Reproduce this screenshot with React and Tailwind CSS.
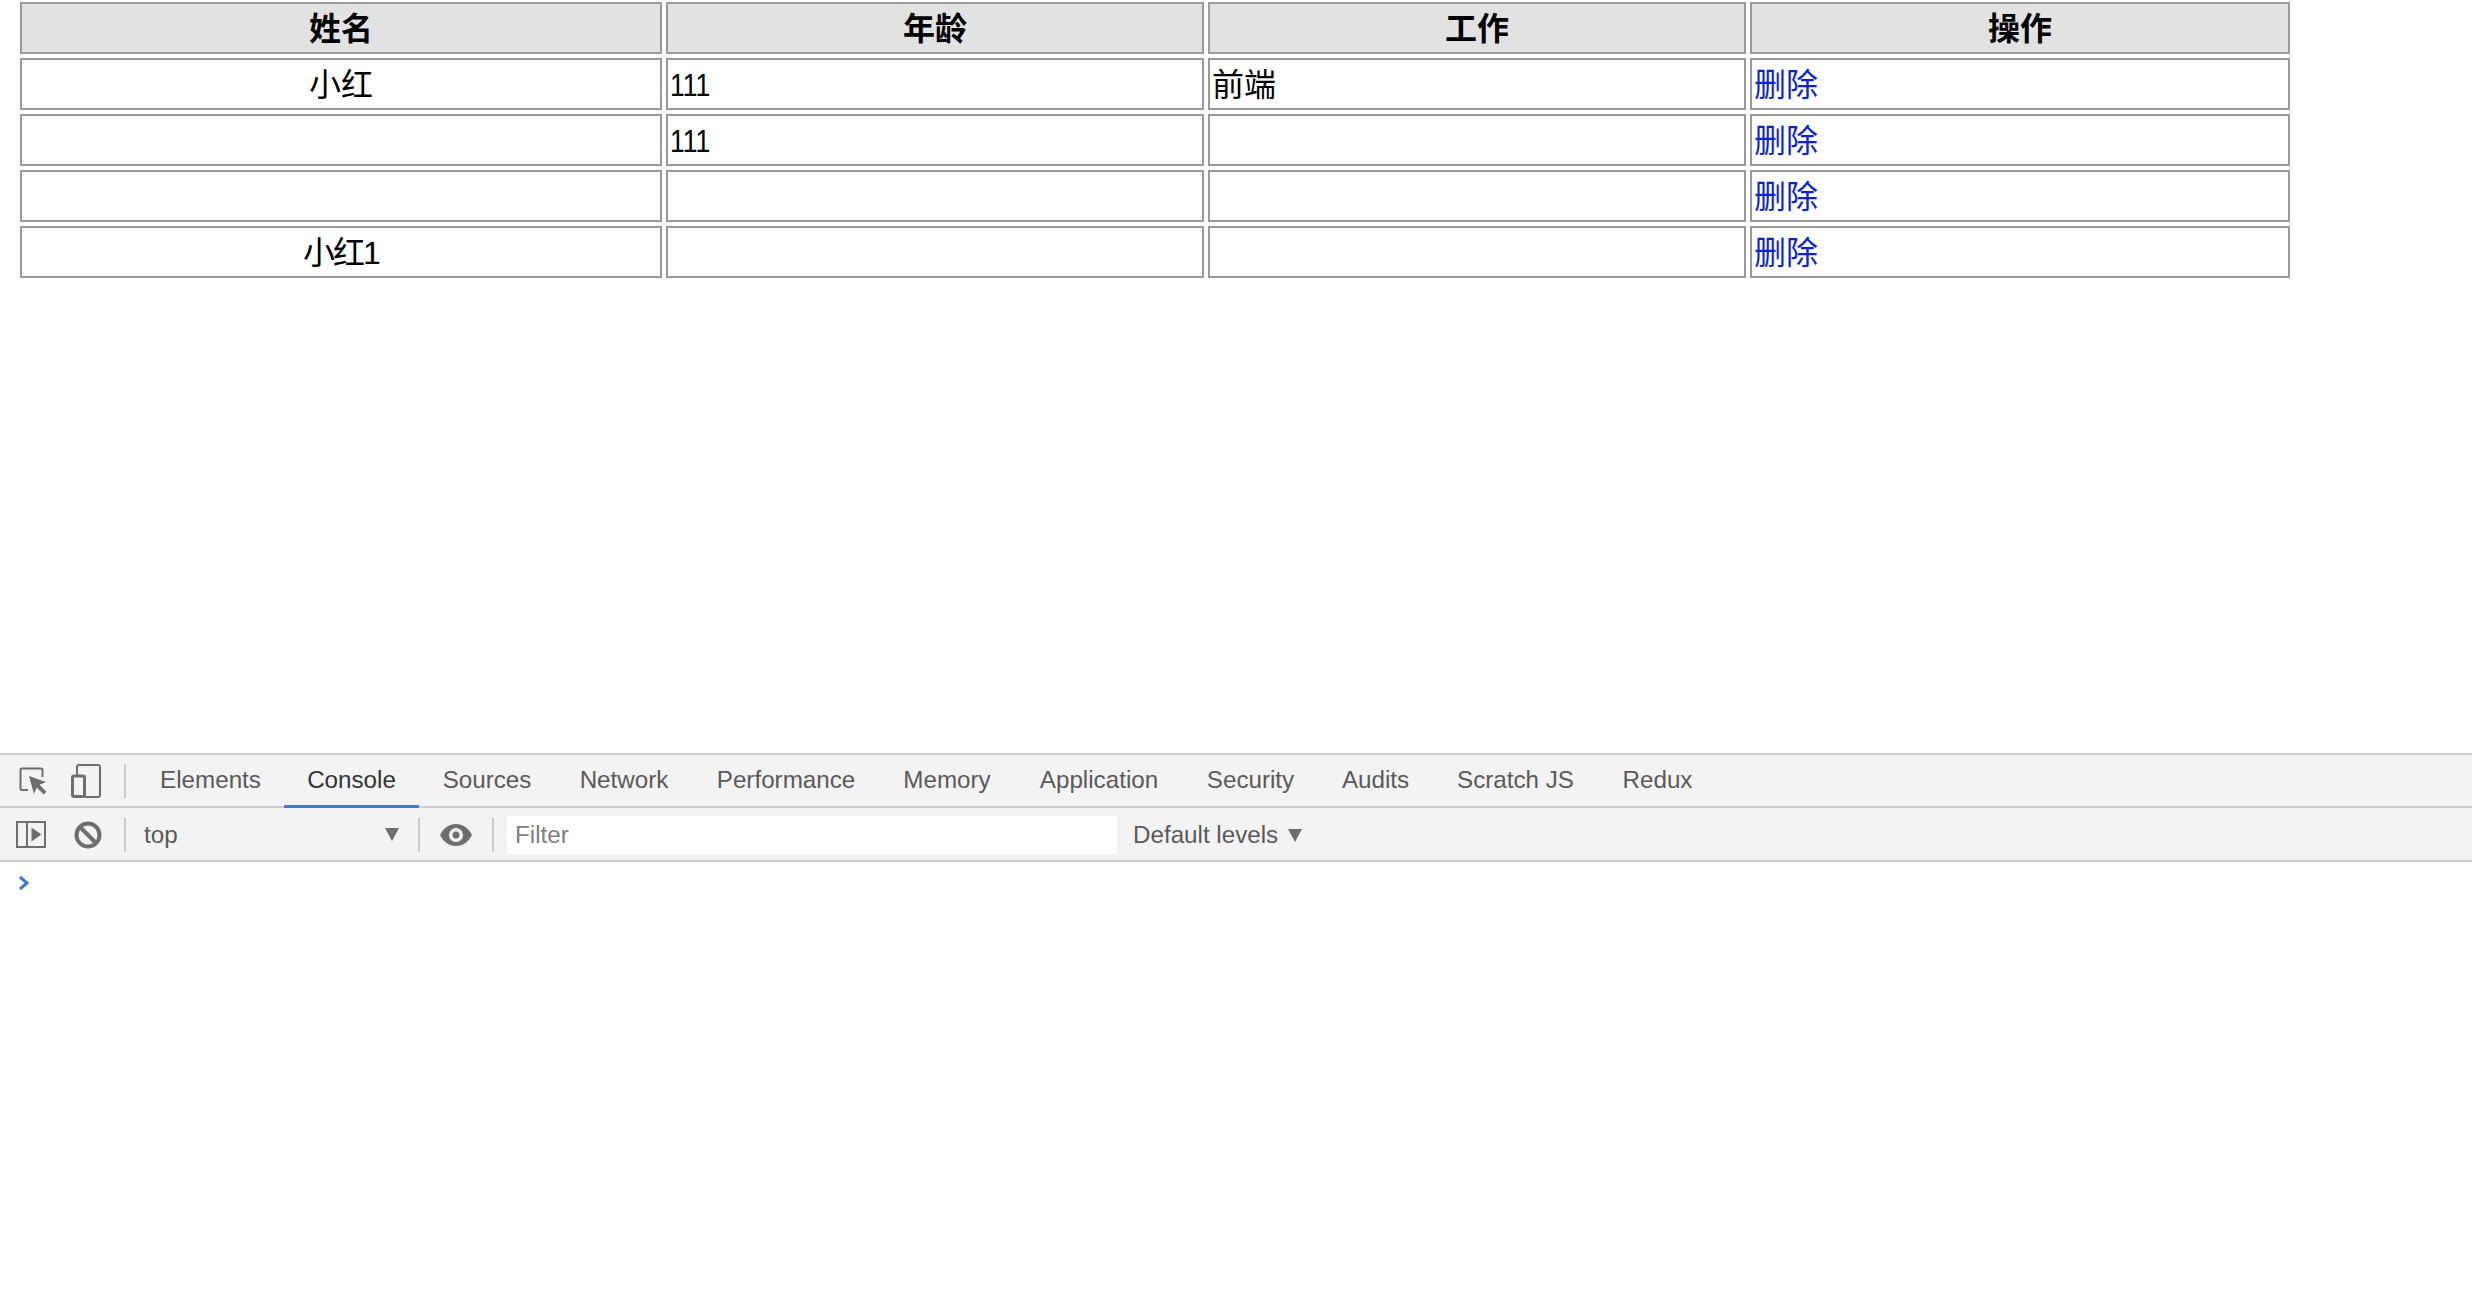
const rows = [
  { name: "小红", age: "111", job: "前端" },
  { name: "", age: "111", job: "" },
  { name: "", age: "", job: "" },
  { name: "小红1", age: "", job: "" },
];

const tabs = [
  { label: "Elements", width: "w-[147px]" },
  { label: "Console", width: "w-[135px]" },
  { label: "Sources", width: "w-[136px]" },
  { label: "Network", width: "w-[138px]" },
  { label: "Performance", width: "w-[186px]" },
  { label: "Memory", width: "w-[136px]" },
  { label: "Application", width: "w-[168px]" },
  { label: "Security", width: "w-[135px]" },
  { label: "Audits", width: "w-[115px]" },
  { label: "Scratch JS", width: "w-[165px]" },
  { label: "Redux", width: "w-[119px]" },
];

function InspectIcon() {
  return (
    <svg width="30" height="30" viewBox="0 0 30 30" fill="none">
      <path d="M10 24H4a1.5 1.5 0 0 1-1.5-1.5V4A1.5 1.5 0 0 1 4 2.500h19A1.500 1.500 0 0 1 24.500 4v7" stroke="#6e6e6e" strokeWidth="2" />
      <path d="M11 10l17 6-6.500 2.800 7 7-2.800 2.700-7-7L16 28z" fill="#6e6e6e" />
    </svg>
  );
}

function DeviceIcon() {
  return (
    <svg width="30" height="34" viewBox="0 0 30 34" fill="none">
      <path d="M6 11V3a2 2 0 0 1 2-2h19a2 2 0 0 1 2 2v28a2 2 0 0 1-2 2H14" stroke="#6e6e6e" strokeWidth="2" />
      <rect x="1.500" y="12" width="12" height="20.500" rx="1.500" stroke="#6e6e6e" strokeWidth="3" fill="#f3f3f3" />
    </svg>
  );
}

function SidebarIcon() {
  return (
    <svg width="30" height="28" viewBox="0 0 30 28" fill="none">
      <rect x="1" y="1" width="28" height="25" stroke="#6e6e6e" strokeWidth="2" />
      <path d="M11 1v25" stroke="#6e6e6e" strokeWidth="2" />
      <path d="M15.500 6.500l10 7-10 7z" fill="#6e6e6e" />
    </svg>
  );
}

function ClearIcon() {
  return (
    <svg width="28" height="28" viewBox="0 0 28 28" fill="none">
      <circle cx="14" cy="14" r="11.500" stroke="#6e6e6e" strokeWidth="4" />
      <path d="M6 6l16 16" stroke="#6e6e6e" strokeWidth="4" />
    </svg>
  );
}

function EyeIcon() {
  return (
    <svg width="32" height="22" viewBox="0 0 32 22">
      <path fillRule="evenodd" fill="#6e6e6e" d="M16 0c7 0 13 4.500 16 11-3 6.500-9 11-16 11S3 17.500 0 11C3 4.500 9 0 16 0zm0 4a7 7 0 1 0 0 14 7 7 0 0 0 0-14zm0 3.500a3.500 3.500 0 1 1 0 7 3.500 3.500 0 0 1 0-7z" />
    </svg>
  );
}

function Arrow() {
  return (
    <svg width="14" height="13" viewBox="0 0 14 13">
      <path d="M0 0h14L7 13z" fill="#6e6e6e" />
    </svg>
  );
}

function Sep() {
  return <div className="w-[2px] h-[34px] bg-[#cbcbcb]" />;
}

export default function App() {
  return (
    <div className="h-[1300px] flex flex-col bg-white font-['Liberation_Sans','Noto_Sans_CJK_SC',sans-serif]">
      <div className="h-[753px] pl-[16px] overflow-hidden">
        <table className="-mt-[2px] border-separate [border-spacing:4px] table-fixed w-[2278px] text-[32px] leading-[46px] text-black">
          <thead>
            <tr className="h-[52px]">
              <th className="w-[642px] border-2 border-[#9a9a9a] bg-[#e2e2e2] p-0 pt-[1px] font-bold">姓名</th>
              <th className="w-[538px] border-2 border-[#9a9a9a] bg-[#e2e2e2] p-0 pt-[1px] font-bold">年龄</th>
              <th className="w-[538px] border-2 border-[#9a9a9a] bg-[#e2e2e2] p-0 pt-[1px] font-bold">工作</th>
              <th className="w-[540px] border-2 border-[#9a9a9a] bg-[#e2e2e2] p-0 pt-[1px] font-bold">操作</th>
            </tr>
          </thead>
          <tbody>
            {rows.map((r, i) => (
              <tr key={i} className="h-[52px]">
                <td className={r.name === "小红1" ? "border-2 border-[#9a9a9a] p-0 pt-[1px] text-center tracking-[-2px]" : "border-2 border-[#9a9a9a] p-0 pt-[1px] text-center"}>{r.name}</td>
                <td className="border-2 border-[#9a9a9a] pt-[1px] pb-0 px-[2px]">
                  <span className="inline-block origin-left scale-x-[0.83]">{r.age}</span>
                </td>
                <td className="border-2 border-[#9a9a9a] pt-[1px] pb-0 px-[2px]">{r.job}</td>
                <td className="border-2 border-[#9a9a9a] pt-[1px] pb-0 px-[2px] text-[#0a22d8]">删除</td>
              </tr>
            ))}
          </tbody>
        </table>
      </div>

      <div className="h-[55px] flex items-stretch bg-[#f3f3f3] border-t-2 border-b-2 border-[#cdcdcd]">
        <div className="w-[18px]" />
        <div className="flex items-center gap-[23px]">
          <InspectIcon />
          <DeviceIcon />
          <Sep />
        </div>
        <div className="flex ml-[11px] text-[24.2px] text-[#5a5a5a]">
          {tabs.map((t) => (
            <div
              key={t.label}
              className={
                t.label === "Console"
                  ? "relative flex items-center justify-center text-[#333333] " + t.width
                  : "relative flex items-center justify-center " + t.width
              }
            >
              {t.label}
              {t.label === "Console" && <div className="absolute left-0 right-0 -bottom-[2px] h-[3px] bg-[#3f78d8]" />}
            </div>
          ))}
        </div>
      </div>

      <div className="h-[54px] pt-[2px] flex items-center bg-[#f3f3f3] border-b-2 border-[#cdcdcd] text-[24.2px] text-[#5a5a5a]">
        <div className="ml-[16px]"><SidebarIcon /></div>
        <div className="ml-[28px]"><ClearIcon /></div>
        <div className="ml-[22px]"><Sep /></div>
        <div className="ml-[18px] w-[259px] flex items-center justify-between pr-[4px]">
          <span>top</span>
          <Arrow />
        </div>
        <div className="ml-[15px]"><Sep /></div>
        <div className="ml-[20px]"><EyeIcon /></div>
        <div className="ml-[20px]"><Sep /></div>
        <div className="ml-[13px] w-[610px] h-[38px] bg-white flex items-center pl-[8px] pt-[1px] text-[#808080]">Filter</div>
        <span className="ml-[16px]">Default levels</span>
        <div className="ml-[10px]"><Arrow /></div>
      </div>

      <div className="flex-1 bg-white pl-[17px] pt-[13px]">
        <svg width="14" height="16" viewBox="0 0 14 16" fill="none">
          <path d="M3 2l7 6-7 6" stroke="#3f78d8" strokeWidth="3" />
        </svg>
      </div>
    </div>
  );
}
